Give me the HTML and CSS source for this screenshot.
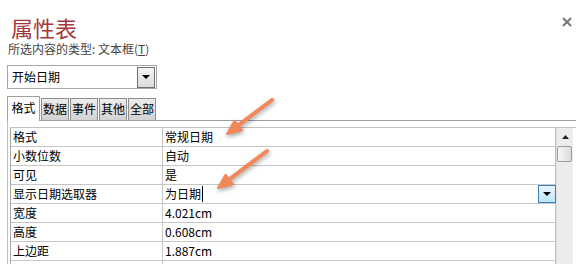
FILE: index.html
```html
<!DOCTYPE html>
<html lang="zh-CN">
<head>
  <meta charset="UTF-8">
  <title>属性表</title>
  <link rel="stylesheet" href="styles.css">
</head>
<body>
  <div class="sheet">
    <div class="title">属性表</div>
    <div class="subtitle">所选内容的类型: 文本框(<u>T</u>)</div>

    <div class="combo">
      <span class="combo-text">开始日期</span>
      <div class="combo-btn">
        <svg width="8" height="5" viewBox="0 0 8 5"><polygon points="0,0 8,0 4,4" fill="#000"/></svg>
      </div>
    </div>

    <div class="tabs">
      <div class="tab active">格式</div>
      <div class="tab">数据</div>
      <div class="tab">事件</div>
      <div class="tab">其他</div>
      <div class="tab">全部</div>
    </div>

    <div class="panel">
      <div class="grid-wrap">
        <div class="grid">
          <div class="row"><div class="label">格式</div><div class="value">常规日期</div></div>
          <div class="row"><div class="label">小数位数</div><div class="value">自动</div></div>
          <div class="row"><div class="label">可见</div><div class="value">是</div></div>
          <div class="row"><div class="label">显示日期选取器</div><div class="value"><span>为日期<span class="caret"></span></span>
            <div class="cell-btn"><svg width="8" height="5" viewBox="0 0 8 5"><polygon points="0,0 8,0 4,4" fill="#000"/></svg></div></div></div>
          <div class="row"><div class="label">宽度</div><div class="value">4.021cm</div></div>
          <div class="row"><div class="label">高度</div><div class="value">0.608cm</div></div>
          <div class="row"><div class="label">上边距</div><div class="value">1.887cm</div></div>
          <div class="row"><div class="label"></div><div class="value"></div></div>
        </div>
        <div class="scrollbar">
          <div class="scroll-up">
            <svg width="7" height="4" viewBox="0 0 7 4"><polygon points="0,4 7,4 3.5,0" fill="#222"/></svg>
          </div>
          <div class="scroll-thumb"></div>
        </div>
      </div>
    </div>

    <div class="close">
      <svg width="10" height="10" viewBox="0 0 10 10"><path d="M1 1 L9 9 M9 1 L1 9" stroke="#777" stroke-width="2"/></svg>
    </div>

    <!-- annotation arrows drawn over the sheet -->
    <svg class="arrows" width="576" height="264" viewBox="0 0 576 264">
      <g fill="#f2875a" stroke="#f2875a" stroke-linecap="round" stroke-linejoin="round">
        <line x1="272" y1="100" x2="238" y2="125.6" stroke-width="4"/>
        <polygon points="227,134 241.8,130.4 234.6,120.8" stroke-width="2"/>
        <line x1="267" y1="151" x2="229" y2="179.6" stroke-width="4"/>
        <polygon points="218,188 232.8,184.4 225.6,174.8" stroke-width="2"/>
      </g>
    </svg>
  </div>
</body>
</html>
```

FILE: styles.css
```css
* { box-sizing: border-box; }
body {
  margin: 0;
  background: #fff;
  font-family: "Noto Sans CJK SC", "Liberation Sans", sans-serif;
  color: #000;
}
.sheet {
  position: relative;
  width: 576px;
  height: 264px;
  overflow: hidden;
  padding: 13px 0 0 7px;
}
.title {
  font-size: 22px;
  line-height: 28px;
  color: #a4373a;
  padding-left: 4px;
}
.subtitle {
  font-size: 12px;
  line-height: 16px;
  color: #444;
  margin-left: 1px;
}
.subtitle u { text-decoration: underline; }

/* Combo box */
.combo {
  margin-top: 8px;
  width: 150px;
  height: 24px;
  border: 1px solid #a6a6a6;
  display: flex;
  align-items: center;
  justify-content: space-between;
  padding: 0 1px 0 4px;
}
.combo-text { font-size: 12px; line-height: 16px; }
.combo-btn {
  width: 18px;
  height: 21px;
  border: 1px solid #707070;
  background: linear-gradient(#f4f4f4, #dcdcdc);
  display: flex;
  align-items: center;
  justify-content: center;
}

/* Tabs */
.tabs {
  margin-top: 8px;
  height: 24px;
  display: flex;
  align-items: flex-end;
  gap: 1px;
  border-bottom: 1px solid #a0a0a0;
}
.tab {
  height: 22px;
  width: 28px;
  font-size: 12px;
  line-height: 20px;
  text-align: center;
  border: 1px solid #8e8e8e;
  border-bottom: none;
  background: linear-gradient(#ececec, #d2d2d2);
}
.tab.active {
  height: 25px;
  width: 33px;
  margin-bottom: -1px;
  background: #fff;
  border-color: #a0a0a0;
  line-height: 22px;
  padding-bottom: 1px;
}
.tab + .tab { margin-left: 0; }

/* Property grid */
.panel {
  border-left: 1px solid #c0c0c0;
  padding: 6px 0 0 2px;
  height: 160px;
}
.grid-wrap {
  display: flex;
  border-top: 1px solid #c0c0c0;
}
.grid {
  width: 546px;
  border-left: 1px solid #a8a8a8;
  border-right: 1px solid #c0c0c0;
}
.row {
  display: flex;
  height: 19px;
  border-bottom: 1px solid #c6c6c6;
  font-size: 12px;
  line-height: 18px;
}
.label {
  width: 152px;
  border-right: 1px solid #c6c6c6;
  padding-left: 2px;
}
.value {
  flex: 1;
  padding-left: 2px;
  display: flex;
  justify-content: space-between;
  align-items: center;
}
.caret {
  display: inline-block;
  width: 1px;
  height: 16px;
  background: #000;
  margin-left: 1px;
  vertical-align: -3px;
}
.cell-btn {
  width: 18px;
  height: 18px;
  margin-right: -1px;
  border: 1px solid #3c7fb1;
  background: linear-gradient(#eaf6fd, #bee6fd);
  display: flex;
  align-items: center;
  justify-content: center;
}

/* Scrollbar */
.scrollbar {
  width: 17px;
  height: 140px;
  background: #ececec;
  border-left: 1px solid #e0e0e0;
  padding-left: 0;
}
.scroll-up {
  height: 18px;
  display: flex;
  align-items: center;
  justify-content: center;
}
.scroll-thumb {
  width: 15px;
  height: 16px;
  margin-left: 0;
  border: 1px solid #9a9a9a;
  border-radius: 2px;
  background: linear-gradient(90deg, #f6f6f6, #dadada);
}

/* Overlays */
.close {
  position: absolute;
  top: 17px;
  left: 562px;
  width: 10px;
  height: 10px;
  display: flex;
}
.arrows {
  position: absolute;
  top: 0;
  left: 0;
  pointer-events: none;
  filter: drop-shadow(1px 2px 2px rgba(0,0,0,0.35));
}
```
